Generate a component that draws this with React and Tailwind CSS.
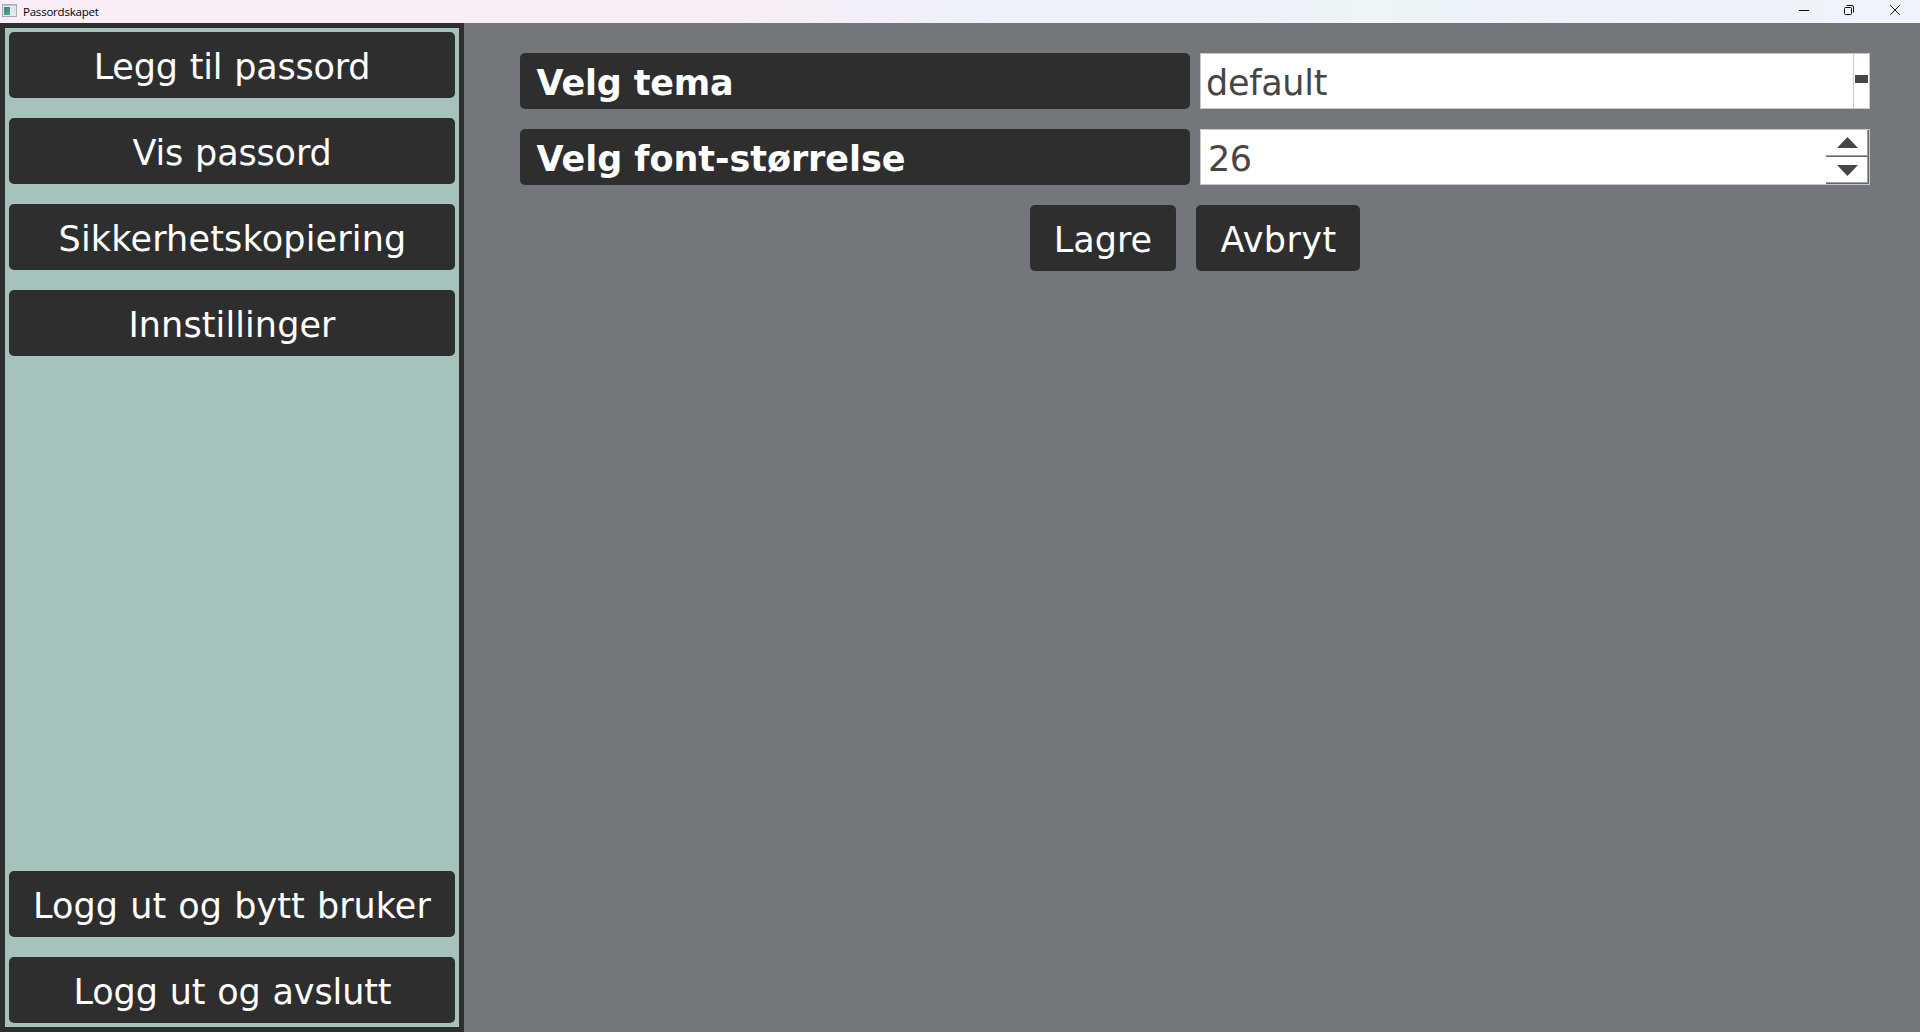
const font = 'font-["DejaVu_Sans",Verdana,sans-serif] text-[35px] leading-none';

function Button({ children, className = '' }) {
  return (
    <button
      className={`flex h-[66px] shrink-0 items-center justify-center rounded-[5px] bg-[#2e2e2e] pt-1 whitespace-nowrap text-white ${font} ${className}`}
    >
      {children}
    </button>
  );
}

function Label({ children, className = '' }) {
  return (
    <div
      className={`flex h-14 items-center rounded-[5px] bg-[#2e2e2e] pt-1 pl-[16.5px] font-bold whitespace-nowrap text-white ${font} ${className}`}
    >
      {children}
    </div>
  );
}

function AppIcon() {
  return (
    <svg width="15" height="13" viewBox="0 0 15 13" shapeRendering="crispEdges">
      <defs>
        <linearGradient id="pane" x1="0" y1="0" x2="0.5" y2="1">
          <stop offset="0" stopColor="#3f78b0" />
          <stop offset="1" stopColor="#4fa873" />
        </linearGradient>
      </defs>
      <rect width="15" height="13" fill="#a9a9b3" />
      <rect x="1" y="1" width="13" height="1" fill="#c5c5cd" />
      <rect x="1" y="2" width="13" height="10" fill="#e9eaf0" />
      <rect x="2" y="3" width="6" height="8" fill="url(#pane)" />
      <rect x="9" y="3" width="2" height="8" fill="#dce9e6" />
      <rect x="12" y="3" width="1" height="5" fill="#c5d5e2" />
    </svg>
  );
}

function TitleBar() {
  return (
    <header className="flex h-[23px] shrink-0 items-center bg-[linear-gradient(to_right,#f9edf7_0%,#f9edf6_37%,#eef2fa_52%,#eef2fa_64%,#edf5f7_71%,#eef2fb_84%,#f0f3fb_100%)] pl-[2px]">
      <div className="-mt-[2px]">
        <AppIcon />
      </div>
      <span className='ml-[6px] font-["Open_Sans",sans-serif] text-[11.5px] leading-none tracking-[-0.22px] text-black'>
        Passordskapet
      </span>
      <div className="ml-auto flex h-full items-start">
        <svg width="121" height="23" viewBox="0 0 121 23" fill="none" stroke="#111">
          <path d="M0 10.5h10" />
          <rect x="45.5" y="7.5" width="7" height="7" rx="1" />
          <path d="M47.5 5.5h5.5a1.5 1.5 0 0 1 1.5 1.5v5.5" />
          <path d="M91.2 5.2l9.6 9.6M100.8 5.2l-9.6 9.6" />
        </svg>
      </div>
    </header>
  );
}

function StepButton({ points, className }) {
  return (
    <div className="h-[27px] border-r border-b border-[#646464]">
      <div className="flex h-full items-start justify-center border-r border-b border-[#a0a0a0]">
        <svg width="21" height="11" viewBox="0 0 21 11" className={`ml-px ${className}`}>
          <polygon points={points} fill="#464646" />
        </svg>
      </div>
    </div>
  );
}

export default function App() {
  return (
    <div className="flex h-[1032px] w-[1920px] flex-col overflow-hidden bg-[#73767b]">
      <TitleBar />
      <div className="flex min-h-0 flex-1">
        <nav className="flex w-[464px] shrink-0 flex-col gap-5 border-5 border-[#2e2e2e] bg-[#a5c3bc] p-1">
          <Button className="tracking-[-0.2px] [word-spacing:1px]">Legg til passord</Button>
          <Button className="tracking-[-0.15px] [word-spacing:1px]">Vis passord</Button>
          <Button className="pl-px tracking-[0.17px]">Sikkerhetskopiering</Button>
          <Button className="tracking-[0.1px]">Innstillinger</Button>
          <Button className="mt-auto tracking-[0.04px] [word-spacing:1px]">Logg ut og bytt bruker</Button>
          <Button className="pl-px tracking-[-0.1px] [word-spacing:0.8px]">Logg ut og avslutt</Button>
        </nav>
        <main className="flex flex-1 flex-col pt-[30px] pr-[50px] pl-14">
          <div className="grid grid-cols-2 gap-x-[10px] gap-y-5">
            <Label className="tracking-[-0.2px]">Velg tema</Label>
            <div className={`flex h-14 border border-[#c8c8c8] bg-white text-[#464646] ${font}`}>
              <div className="flex flex-1 items-center pt-1 pl-[5px] tracking-[-0.3px]">default</div>
              <div className="flex w-4 justify-center border-l border-[#c8c8c8] pt-[21px]">
                <div className="h-2 w-[13px] bg-[#464646]" />
              </div>
            </div>
            <Label className="tracking-[-0.06px]">Velg font-størrelse</Label>
            <div className={`flex h-14 border border-[#c8c8c8] bg-white text-[#464646] ${font}`}>
              <div className="flex flex-1 items-center pt-1 pl-[7px] tracking-[-0.4px]">26</div>
              <div className="w-[43px]">
                <StepButton points="0,11 10.5,0 21,11" className="mt-[7px]" />
                <StepButton points="0,0 10.5,11 21,0" className="mt-2" />
              </div>
            </div>
          </div>
          <div className="mt-5 flex justify-center gap-5">
            <Button className="w-[146px]">Lagre</Button>
            <Button className="w-[164px] pl-px tracking-[0.4px]">Avbryt</Button>
          </div>
        </main>
      </div>
    </div>
  );
}
